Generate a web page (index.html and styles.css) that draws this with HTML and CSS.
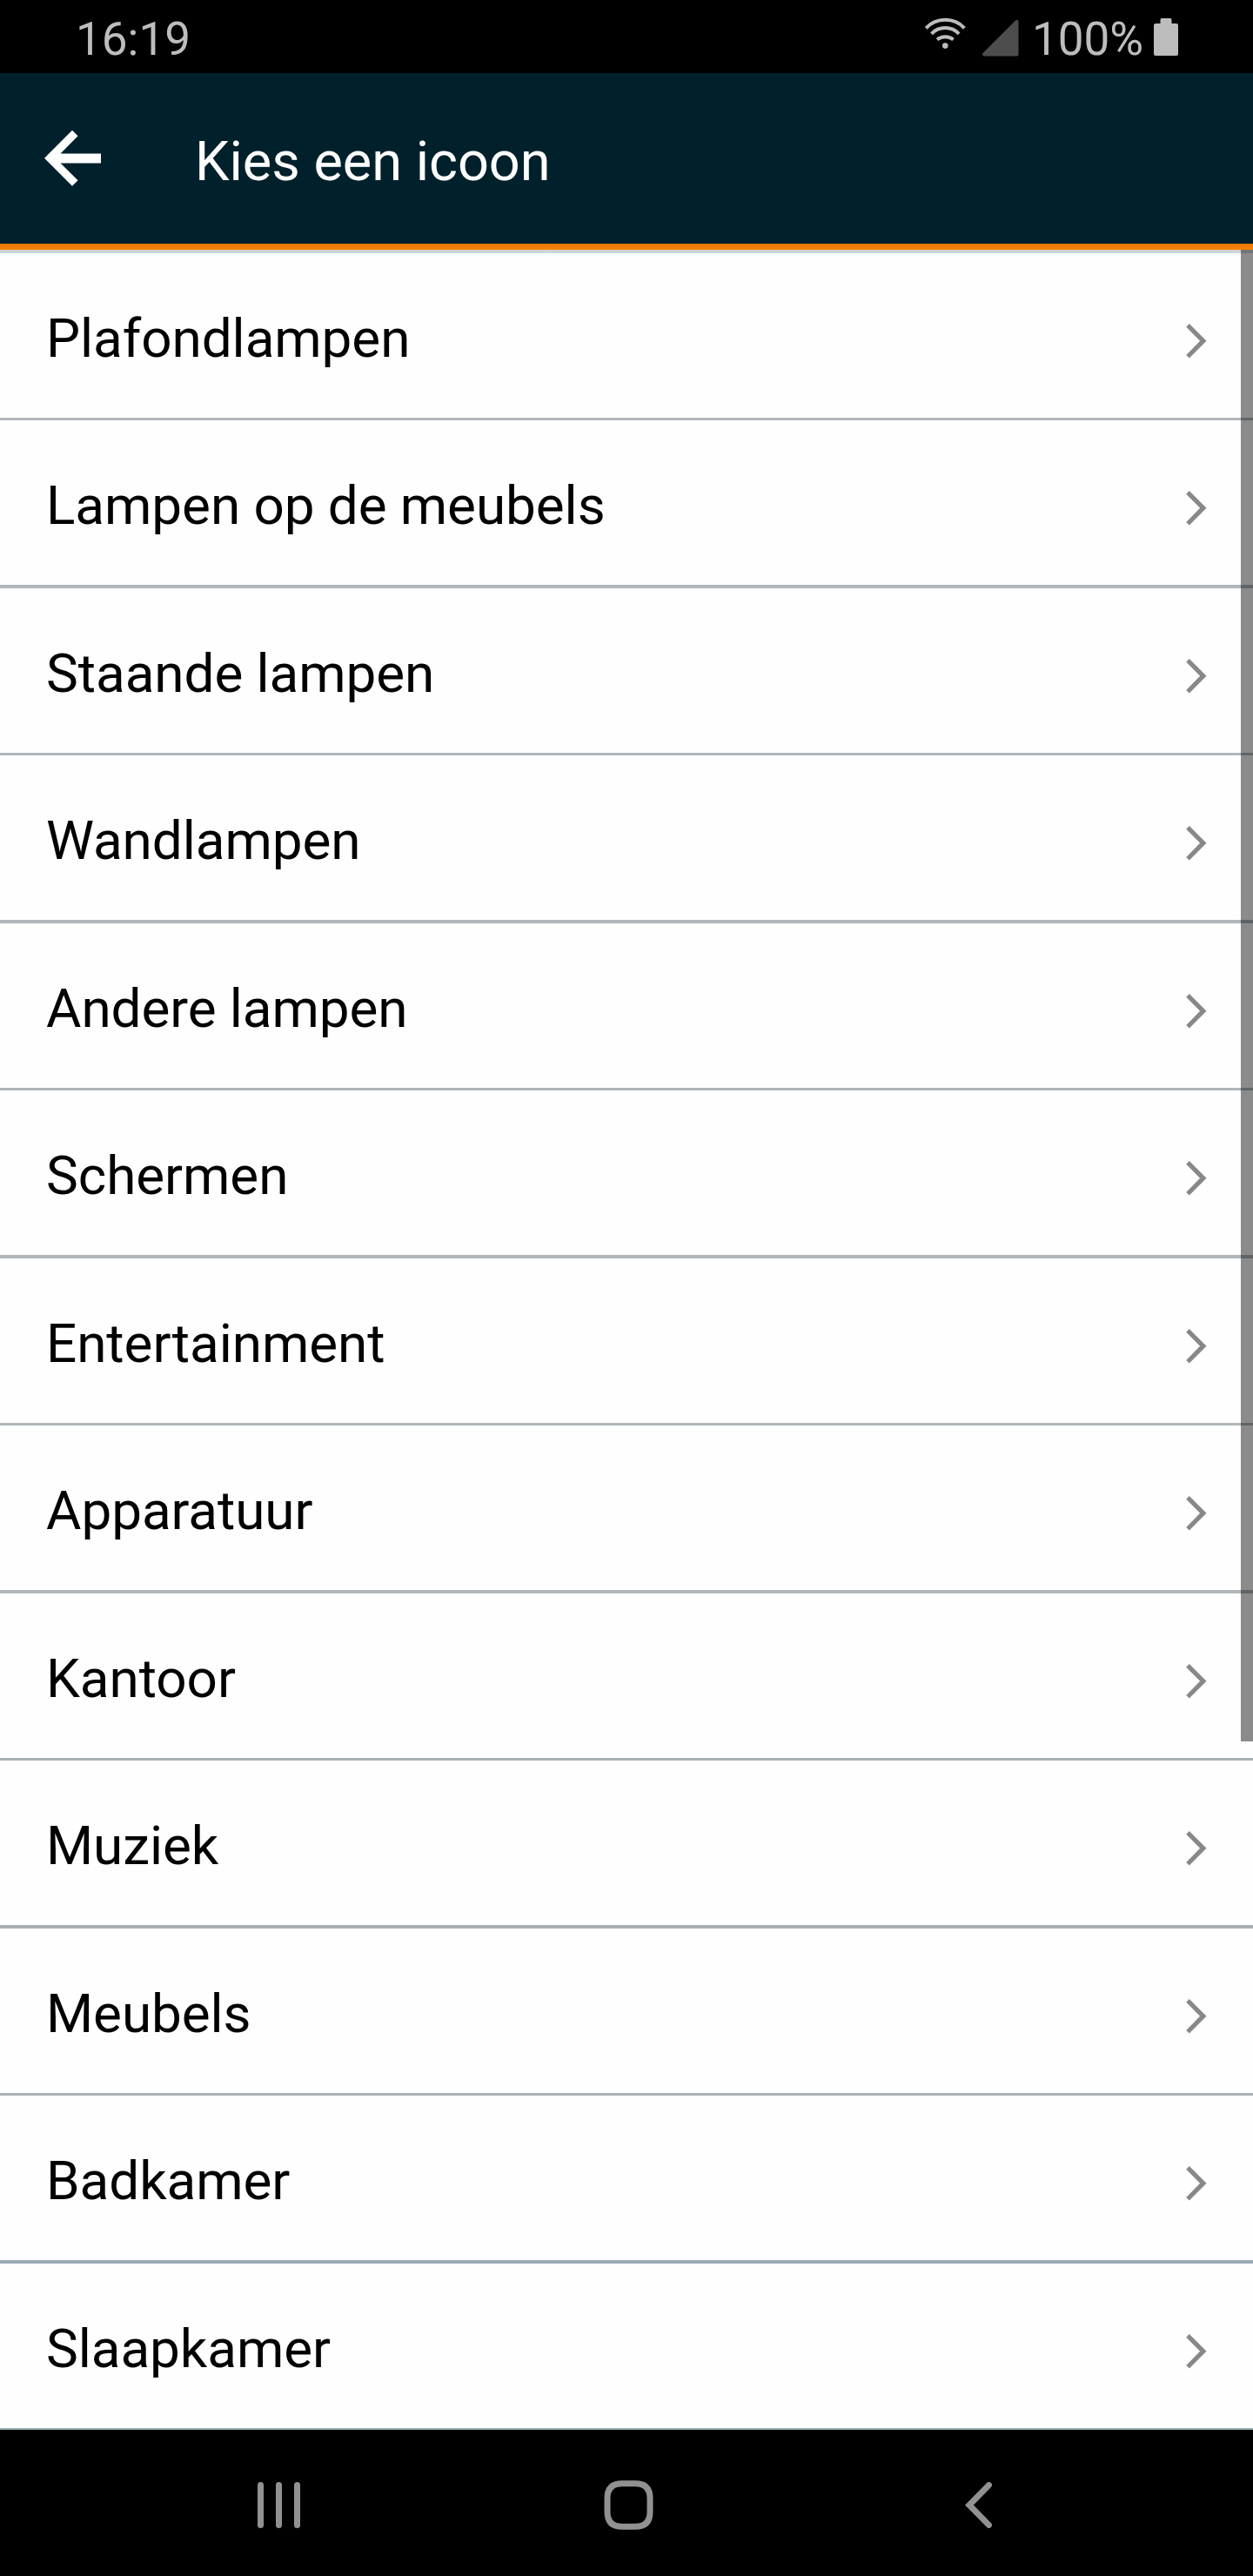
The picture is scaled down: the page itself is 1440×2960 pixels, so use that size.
FILE: index.html
```html
<!DOCTYPE html>
<html lang="nl">
<head>
<meta charset="utf-8">
<title>Kies een icoon</title>
<link rel="stylesheet" href="styles.css">
</head>
<body>
<svg width="0" height="0" class="defs"><symbol id="chevron" viewBox="0 0 24 40"><path d="M3.8 0L23.5 19.8 3.8 39.6.2 36 16.1 19.8.2 3.7z"/></symbol></svg>
<div class="status">
  <span class="clock">16:19</span>
  <svg class="wifi" viewBox="0 0 48 36" width="48" height="36"><g fill="none" stroke="#bdbdbd" stroke-width="4"><path d="M2.2 12.3A30.6 30.6 0 0 1 46.4 12.3"/><path d="M8.5 18.8A22 22 0 0 1 40.1 18.8"/><path d="M15 25.5A15 15 0 0 1 33.6 25.5"/></g><circle cx="24.3" cy="32.6" r="3.3" fill="#bdbdbd"/></svg>
  <svg class="signal" viewBox="0 0 43 42" width="43" height="42"><path d="M3 39.5L40.5 2V39.5z" fill="#4d4d4d" stroke="#4d4d4d" stroke-width="4" stroke-linejoin="round"/></svg>
  <span class="percent">100%</span>
  <svg class="battery" viewBox="0 0 28 43" width="28" height="43"><path d="M9 0H19Q20.500 0 20.500 1.500V6H26Q28 6 28 8V41Q28 43 26 43H2Q0 43 0 41V8Q0 6 2 6H7.500V1.500Q7.500 0 9 0z" fill="#bdbdbd"/></svg>
</div>
<header class="bar">
  <svg class="back" viewBox="0 0 66 66" width="66" height="66"><path d="M0 32.700L32 .7 38.500 7.200 18.500 27.500H65V38.500H18.500L38.500 58.200 32 64.700z" transform="translate(0 -1)" transform-origin="0 0" fill="#fff"/></svg>
  <h1>Kies een icoon</h1>
</header>
<main>
  <ul class="list">
    <li><span>Plafondlampen</span><svg><use href="#chevron"/></svg></li>
    <li><span>Lampen op de meubels</span><svg><use href="#chevron"/></svg></li>
    <li><span>Staande lampen</span><svg><use href="#chevron"/></svg></li>
    <li><span>Wandlampen</span><svg><use href="#chevron"/></svg></li>
    <li><span>Andere lampen</span><svg><use href="#chevron"/></svg></li>
    <li><span>Schermen</span><svg><use href="#chevron"/></svg></li>
    <li><span>Entertainment</span><svg><use href="#chevron"/></svg></li>
    <li><span>Apparatuur</span><svg><use href="#chevron"/></svg></li>
    <li><span>Kantoor</span><svg><use href="#chevron"/></svg></li>
    <li><span>Muziek</span><svg><use href="#chevron"/></svg></li>
    <li><span>Meubels</span><svg><use href="#chevron"/></svg></li>
    <li><span>Badkamer</span><svg><use href="#chevron"/></svg></li>
    <li><span>Slaapkamer</span><svg><use href="#chevron"/></svg></li>
  </ul>
  <div class="scrollbar"></div>
</main>
<nav class="nav">
  <svg viewBox="0 0 49 53" width="49" height="53"><path d="M3.500 3.500V49.500M24.500 3.500V49.500M45.500 3.500V49.500" stroke="#919191" stroke-width="7" stroke-linecap="round"/></svg>
  <svg class="home" viewBox="0 0 57 57" width="57" height="57"><path d="M21 3.700H36Q53 3.700 53 20.500V36.500Q53 53.300 36 53.300H21Q4 53.300 4 36.500V20.500Q4 3.700 21 3.700z" fill="none" stroke="#919191" stroke-width="7"/></svg>
  <svg viewBox="0 0 31 53" width="31" height="53"><path d="M27.400 3.600L4.900 26.500 27.400 49.400" fill="none" stroke="#919191" stroke-width="7" stroke-linecap="round"/></svg>
</nav>
</body>
</html>
```
FILE: styles.css
```css
* { box-sizing: border-box; margin: 0; padding: 0; }
body {
  width: 1440px;
  height: 2960px;
  overflow: hidden;
  display: flex;
  flex-direction: column;
  background: #fefefe;
  font-family: Roboto, "Liberation Sans", sans-serif;
}
svg { display: block; flex: none; }
.defs { position: absolute; }

.status {
  flex: none;
  height: 84px;
  display: flex;
  align-items: flex-start;
  background: #000;
  color: #bdbdbd;
  font-size: 53px;
  line-height: 62px;
}
.status span { flex: none; margin-top: 14px; white-space: nowrap; }
.clock { width: 1062px; padding-left: 87px; }
.wifi { margin-top: 20px; }
.signal { margin: 23px 0 0 18px; }
.percent { width: 155px; padding-left: 15px; }
.battery { margin-top: 21px; }

.bar {
  flex: none;
  height: 203px;
  display: flex;
  align-items: flex-start;
  background: linear-gradient(#e67700, #f98200) bottom / 100% 7px no-repeat #00212b;
}
.back { margin: 66px 0 0 51px; }
.bar h1 {
  margin: 65px 0 0 107px;
  color: #fff;
  font-size: 63px;
  font-weight: 400;
  line-height: 74px;
  white-space: nowrap;
}

main { position: relative; flex: none; height: 2505px; overflow: hidden; }
.list { list-style: none; border-top: 4px solid #d0d4d6; }
.list li {
  height: 192px;
  display: flex;
  align-items: flex-start;
  justify-content: space-between;
  padding: 61px 53px 0 53px;
  border-bottom: 3px solid #b0b6ba;
  font-size: 62px;
  letter-spacing: -.06px;
  line-height: 74px;
  color: #000;
}
.list li:nth-child(even) { height: 193px; border-bottom-width: 4px; }
.list li:nth-child(n+9) { border-bottom-color: #a9b1b6; }
.list li:nth-child(n+12) { border-bottom-color: #9aabb5; }
.list svg { width: 24px; height: 40px; margin-top: 19.5px; fill: #888; }
.scrollbar {
  position: absolute;
  top: 0;
  right: 0;
  width: 14px;
  height: 1714px;
  background: rgba(0, 0, 0, .45);
}

.nav {
  flex: none;
  height: 168px;
  display: flex;
  align-items: center;
  padding: 5px 0 0 296px;
  background: #000;
}
.home { margin: 0 358px 0 349px; }
```
